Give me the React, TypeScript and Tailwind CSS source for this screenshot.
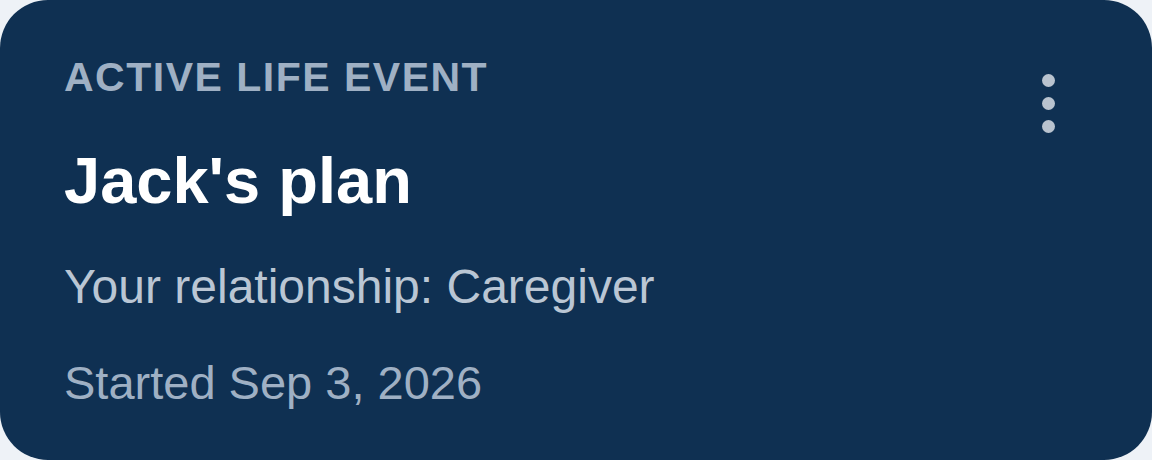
export default function App() {
  return (
    <div className="h-[460px] w-full bg-[#eef2f7]" style={{ fontFamily: '"Liberation Sans", Arial, sans-serif' }}>
      <div className="relative flex h-full w-full flex-col rounded-[48px] bg-[#0f3052] pl-[64px] pt-[53px]">
        <div className="text-[41px] leading-[48px] font-bold tracking-[1.5px] text-[#9fb0c4]">ACTIVE LIFE EVENT</div>
        <h1 className="mt-[44px] text-[65px] leading-[72px] font-bold text-white">Jack's plan</h1>
        <p className="mt-[42px] text-[48px] leading-[56px] text-[#bac6d4]">Your relationship: Caregiver</p>
        <p className="mt-[40px] text-[47px] leading-[56px] text-[#9fb0c4]">Started Sep 3, 2026</p>
        <button type="button" className="absolute right-[93px] top-[70px] flex flex-col items-center gap-[10px] p-1">
          <span className="h-[13px] w-[13px] rounded-full bg-[#b9c3cf]" />
          <span className="h-[13px] w-[13px] rounded-full bg-[#b9c3cf]" />
          <span className="h-[13px] w-[13px] rounded-full bg-[#b9c3cf]" />
        </button>
      </div>
    </div>
  )
}
